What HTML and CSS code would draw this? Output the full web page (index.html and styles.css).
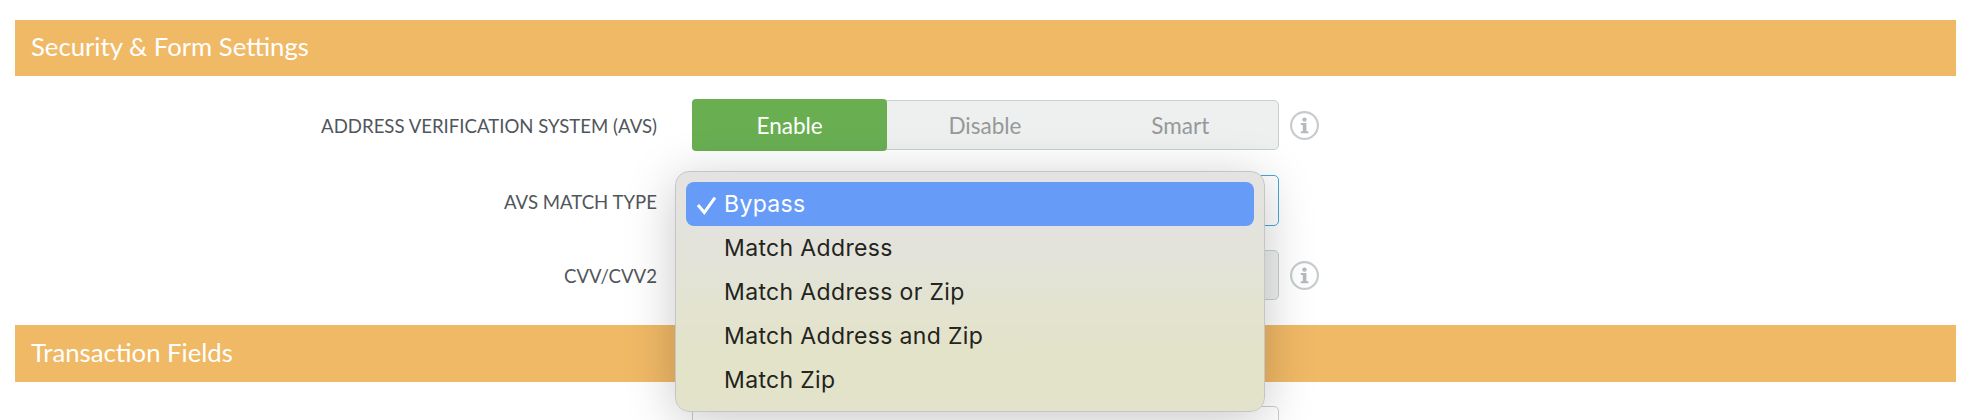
FILE: index.html
```html
<!DOCTYPE html>
<html lang="en">
<head>
  <meta charset="UTF-8" />
  <title>Security &amp; Form Settings</title>
  <link rel="stylesheet" href="styles.css">
</head>
<body>

<div class="page">
  <h2 class="section-bar">Security &amp; Form Settings</h2>

  <div class="form-row">
    <label class="row-label">Address Verification System (AVS)</label>
    <div class="toggle">
      <span class="toggle-item active">Enable</span>
      <span class="toggle-item">Disable</span>
      <span class="toggle-item">Smart</span>
    </div>
    <svg class="info-icon" viewBox="0 0 29 29" aria-hidden="true">
      <circle cx="14.5" cy="14.5" r="13.4" />
      <circle class="info-dot" cx="14.5" cy="8.6" r="2.2" />
      <path class="info-stem" d="M10.8 12h5.6v8.2h2v2h-7.6v-2h2v-6.2h-2z" />
    </svg>
  </div>

  <div class="form-row select-row">
    <label class="row-label">AVS Match Type</label>
    <div class="select-box"></div>
  </div>

  <div class="form-row">
    <label class="row-label">CVV/CVV2</label>
    <div class="toggle"></div>
    <svg class="info-icon" viewBox="0 0 29 29" aria-hidden="true">
      <circle cx="14.5" cy="14.5" r="13.4" />
      <circle class="info-dot" cx="14.5" cy="8.6" r="2.2" />
      <path class="info-stem" d="M10.8 12h5.6v8.2h2v2h-7.6v-2h2v-6.2h-2z" />
    </svg>
  </div>

  <h2 class="section-bar second">Transaction Fields</h2>

  <div class="form-row">
    <label class="row-label"><span class="required">*</span></label>
    <div class="text-field"></div>
  </div>
</div>

<!-- native select menu, open over the form -->
<ul class="select-menu">
  <li class="selected">
    <svg class="check" viewBox="0 0 20 20" aria-hidden="true"><path d="M2 10l6.3 7.5L19 2.5" /></svg>
    Bypass
  </li>
  <li>Match Address</li>
  <li>Match Address or Zip</li>
  <li>Match Address and Zip</li>
  <li>Match Zip</li>
</ul>

</body>
</html>
```

FILE: styles.css
```css
html, body {
  height: 100%;
  overflow: hidden;
}

body {
  font-family: Lato, "Open Sans", Arial, sans-serif;
  background-color: white;
  margin: 0;
}

.page {
  padding: 20px 20px 0 15px;
  display: flex;
  flex-direction: column;
  gap: 24px;
}

.section-bar {
  margin: 0;
  height: 56px;
  padding-left: 16px;
  background-color: #f0b966;
  color: white;
  font-size: 25.7px;
  font-weight: 400;
  line-height: 52px;
}

.section-bar.second {
  margin-top: 1px;
  height: 57px;
  line-height: 54px;
}

.form-row {
  display: flex;
  align-items: center;
  height: 50px;
}

.select-row {
  margin-top: 1px;
  height: 51px;
}

.row-label {
  width: 642px;
  flex: none;
  padding: 2px 35px 0 0;
  text-align: right;
  text-transform: uppercase;
  color: #50565b;
  font-size: 18.6px;
}

.required {
  color: #e0304a;
}

.toggle {
  width: 585px;
  height: 48px;
  display: flex;
  align-items: center;
  background-color: #eef0ef;
  border: 1px solid #c9ced2;
  border-radius: 5px;
}

.toggle-item {
  flex: 1;
  align-self: stretch;
  display: flex;
  align-items: center;
  justify-content: center;
  color: #96999b;
  font-size: 22.5px;
}

.toggle-item.active {
  margin: -2px 0 -2px -1px;
  background-color: #69af52;
  border-radius: 4px;
  color: white;
}

.select-box {
  width: 585px;
  height: 49px;
  background-color: white;
  border: 1px solid #45a9d6;
  border-radius: 5px;
}

.info-icon {
  width: 29px;
  height: 29px;
  margin-left: 11px;
  flex: none;
}

.info-icon circle {
  fill: none;
  stroke: #c6cccf;
  stroke-width: 2.2;
}

.info-icon .info-dot {
  fill: #b4babd;
  stroke: none;
}

.info-icon .info-stem {
  fill: #b4babd;
}

.text-field {
  width: 585px;
  height: 48px;
  background-color: white;
  border: 1px solid #c9ced2;
  border-radius: 5px;
}

.select-menu {
  position: absolute;
  left: 675px;
  top: 171px;
  width: 590px;
  height: 241px;
  box-sizing: border-box;
  margin: 0;
  padding: 10px;
  list-style: none;
  background: linear-gradient(180deg, #e4e3e1 0%, #e3e3dc 30%, #e3e3c9 75%, #e3e3cb 100%);
  border: 1px solid #c3c5c6;
  border-radius: 14px;
  box-shadow: 0 8px 50px rgba(0, 0, 0, 0.22);
  font-family: Inter, "Noto Sans", sans-serif;
  font-size: 23px;
  letter-spacing: 0.35px;
  color: #232320;
}

.select-menu li {
  position: relative;
  height: 44px;
  padding-left: 38px;
  line-height: 44px;
}

.select-menu li.selected {
  background-color: #669cf8;
  border-radius: 8px;
  color: white;
}

.check {
  position: absolute;
  left: 10px;
  top: 13px;
  width: 20px;
  height: 20px;
}

.check path {
  fill: none;
  stroke: white;
  stroke-width: 3;
}
```
